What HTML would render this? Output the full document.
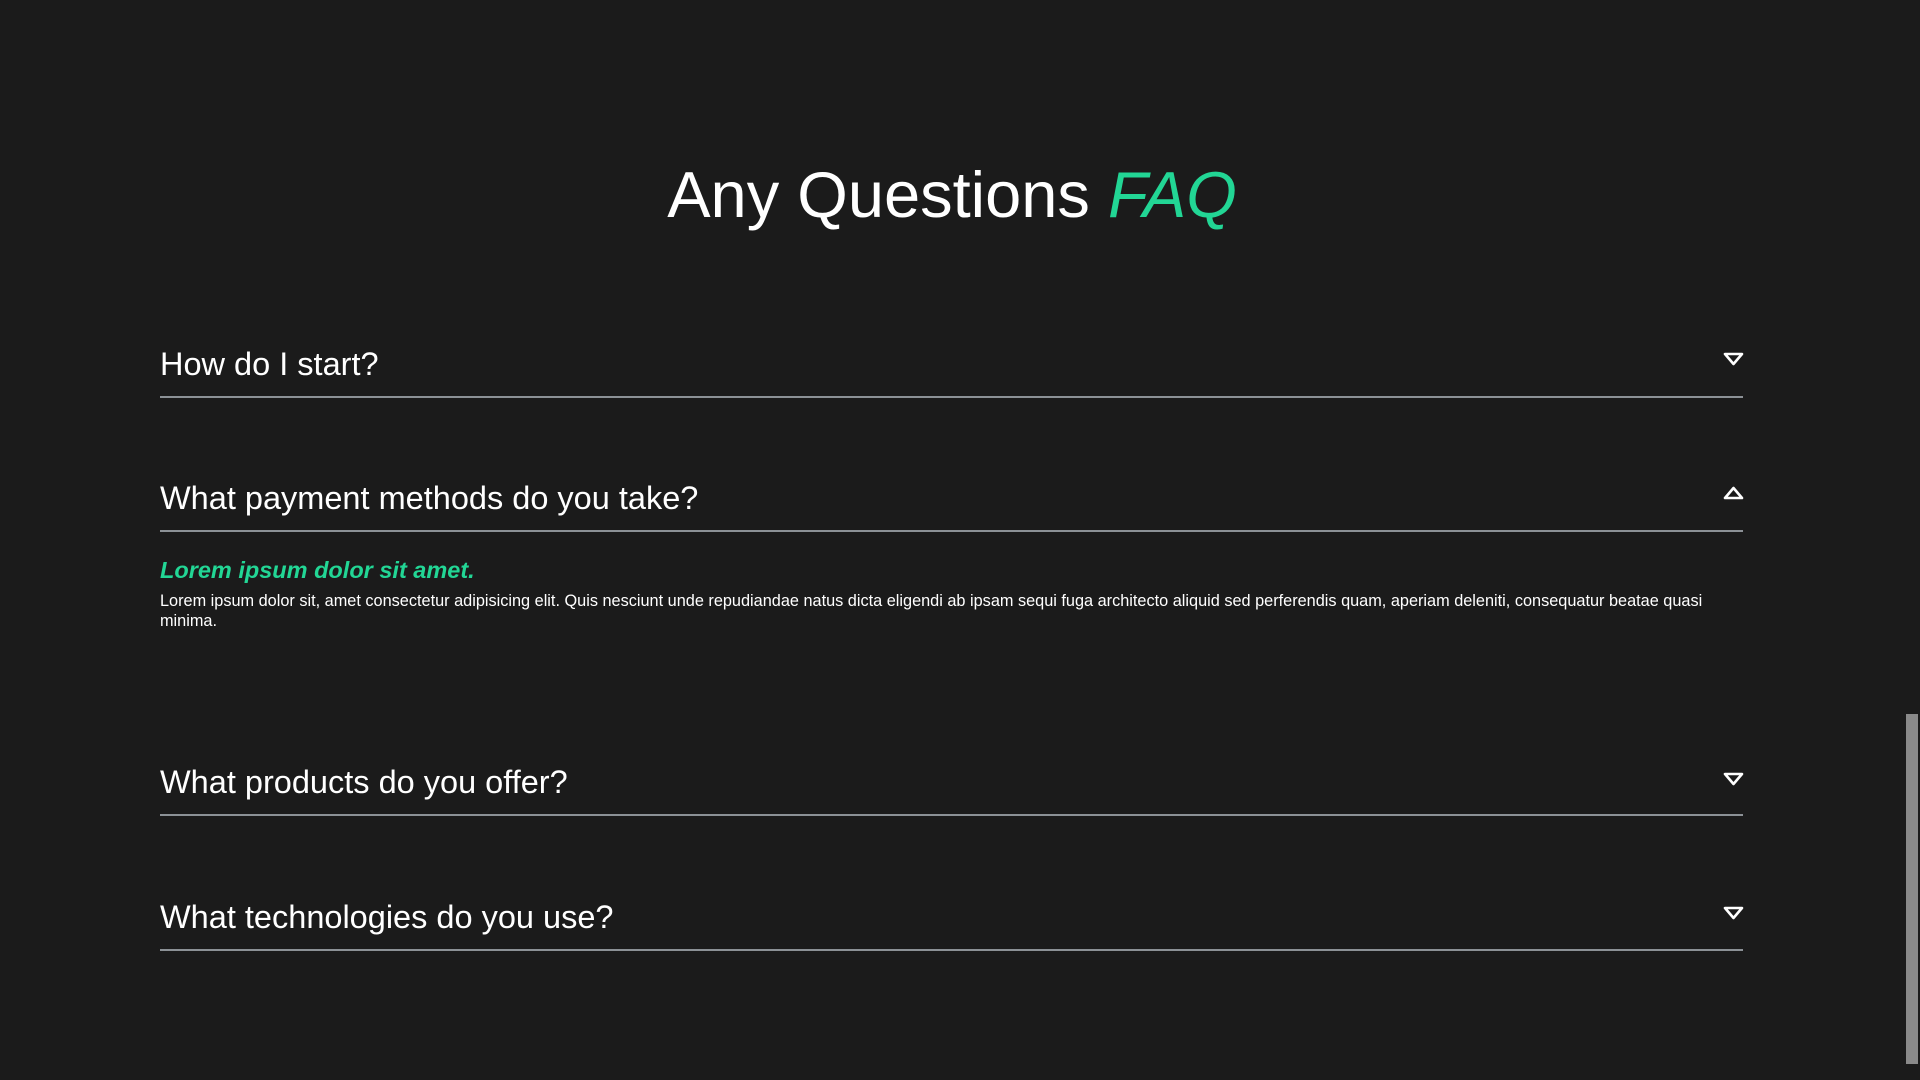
<!DOCTYPE html>
<html><head><meta charset="utf-8"><style>
html,body{margin:0;padding:0;background:#1b1b1b;width:1920px;height:1080px;overflow:hidden;font-family:"Liberation Sans",sans-serif;color:#fff}
.t{position:absolute;left:0;width:1904px;text-align:center;top:157px;font-size:65px;line-height:76px}
.t i{color:#22d695}
.q{position:absolute;left:160px;width:1583px;font-size:32.5px;line-height:40px}
.l{position:absolute;left:160px;width:1583px;height:2px;background:#8c9196}
.ic{position:absolute;left:1723px}
.a1{position:absolute;left:160px;top:555px;font-size:23.5px;font-style:italic;font-weight:bold;color:#22d695;line-height:30px}
.a2{position:absolute;left:160px;top:592px;font-size:16.3px;line-height:19.5px;width:1600px;white-space:nowrap}
.sb{position:absolute;right:0;top:0;width:16px;height:1080px;background:#1b1b1b}
.th{position:absolute;right:2px;top:714px;width:12px;height:350px;background:#8a8a8a}
</style></head><body>
<div class="t">Any Questions <i>FAQ</i></div>

<div class="q" style="top:344px">How do I start?</div>
<svg class="ic" style="top:352px" width="21" height="14"><path d="M2 2H19L10.5 12Z" fill="none" stroke="#fff" stroke-width="2.6" stroke-linejoin="round"/></svg>
<div class="l" style="top:396px"></div>

<div class="q" style="top:478px">What payment methods do you take?</div>
<svg class="ic" style="top:486px" width="21" height="14"><path d="M2 12H19L10.5 2Z" fill="none" stroke="#fff" stroke-width="2.6" stroke-linejoin="round"/></svg>
<div class="l" style="top:530px"></div>

<div class="a1">Lorem ipsum dolor sit amet.</div>
<div class="a2">Lorem ipsum dolor sit, amet consectetur adipisicing elit. Quis nesciunt unde repudiandae natus dicta eligendi ab ipsam sequi fuga architecto aliquid sed perferendis quam, aperiam deleniti, consequatur beatae quasi<br>minima.</div>

<div class="q" style="top:762px">What products do you offer?</div>
<svg class="ic" style="top:772px" width="21" height="14"><path d="M2 2H19L10.5 12Z" fill="none" stroke="#fff" stroke-width="2.6" stroke-linejoin="round"/></svg>
<div class="l" style="top:814px"></div>

<div class="q" style="top:897px">What technologies do you use?</div>
<svg class="ic" style="top:906px" width="21" height="14"><path d="M2 2H19L10.5 12Z" fill="none" stroke="#fff" stroke-width="2.6" stroke-linejoin="round"/></svg>
<div class="l" style="top:949px"></div>

<div class="sb"><div class="th"></div></div>
</body></html>
